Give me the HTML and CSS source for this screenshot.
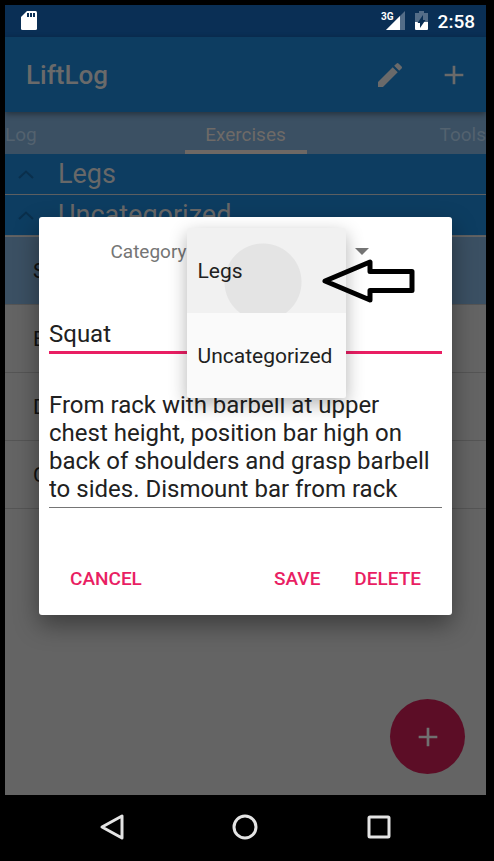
FILE: index.html
```html
<!DOCTYPE html>
<html lang="en">
<head>
<meta charset="utf-8">
<meta name="viewport" content="width=device-width, initial-scale=1">
<title>LiftLog</title>
<link rel="stylesheet" href="styles.css">
</head>
<body>
<div class="phone">
  <div class="screen">
    <div class="status-bar">
      <svg class="sd-icon" width="16" height="20" viewBox="0 0 16 20" aria-hidden="true"><path fill="#fff" d="M6 0h8.500a1.500 1.500 0 0 1 1.500 1.500v16a1.500 1.500 0 0 1-1.500 1.500h-13a1.500 1.500 0 0 1-1.500-1.500V6z"/><path fill="#0a2f55" d="M6 2h2v4H6zM9 2h2v4H9zM12 2h2v4h-2z"/></svg>
      <div class="status-right">
        <div class="signal">
          <span class="network">3G</span>
          <svg width="20" height="20" viewBox="0 0 20 20" aria-hidden="true"><path fill="#546d88" d="M20 0v19H1z"/><path fill="#fff" d="M15 5v14H1z"/></svg>
        </div>
        <svg width="13" height="20" viewBox="0 0 13 20" aria-hidden="true"><path fill="#546d88" d="M4 0h5v2h4v9H0V2h4z"/><path fill="#fff" d="M0 11h13v7a1 1 0 0 1-1 1H1a1 1 0 0 1-1-1z"/><path fill="#0a2f55" d="M8 4v5h2.500L5 17v-5H2.500z"/></svg>
        <time>2:58</time>
      </div>
    </div>
    <header class="app-bar">
      <h1>LiftLog</h1>
      <button class="icon-button" aria-label="Edit"><svg width="32" height="32" viewBox="0 0 24 24"><path fill="currentColor" d="M3 17.250V21h3.750L17.810 9.940l-3.750-3.750L3 17.250zM20.710 7.040a1 1 0 0 0 0-1.410l-2.340-2.340a1 1 0 0 0-1.410 0l-1.830 1.830 3.750 3.750 1.830-1.830z"/></svg></button>
      <button class="icon-button" aria-label="Add"><svg width="32" height="32" viewBox="0 0 24 24"><path fill="currentColor" d="M19 13h-6v6h-2v-6H5v-2h6V5h2v6h6z"/></svg></button>
    </header>
    <nav class="tabs">
      <a href="#log">Log</a>
      <a href="#exercises" class="active" aria-current="page">Exercises</a>
      <a href="#tools">Tools</a>
    </nav>
    <main class="list">
      <h2 class="group"><svg width="16" height="9" viewBox="0 0 16 9" aria-hidden="true"><path d="M1 8l7-6.500L15 8"/></svg>Legs</h2>
      <h2 class="group"><svg width="16" height="9" viewBox="0 0 16 9" aria-hidden="true"><path d="M1 8l7-6.500L15 8"/></svg>Uncategorized</h2>
      <ul class="exercises">
        <li class="selected">Squat</li>
        <li>Bench</li>
        <li>Deadlift</li>
        <li>Curl</li>
      </ul>
    </main>
    <button class="fab" aria-label="Add exercise"><svg width="32" height="32" viewBox="0 0 24 24"><path fill="currentColor" d="M19 13h-6v6h-2v-6H5v-2h6V5h2v6h6z"/></svg></button>
    <div class="overlay">
      <form class="dialog" role="dialog" aria-label="Edit exercise">
        <div class="category">
          <label for="category">Category</label>
          <div class="spinner">
            <select id="category"><option>Legs</option><option>Uncategorized</option></select>
            <svg width="14" height="7" viewBox="0 0 14 7" aria-hidden="true"><path fill="#757575" d="M0 0h14L7 7z"/></svg>
            <div class="menu">
              <button type="button" class="pressed">Legs</button>
              <button type="button">Uncategorized</button>
            </div>
            <svg class="pointer" width="96" height="46" viewBox="0 0 96 46" aria-hidden="true"><path fill="none" stroke="#000" stroke-width="5" stroke-linejoin="round" d="M5 23L50 4v9.500h42v19H50V42z"/></svg>
          </div>
        </div>
        <input class="name" type="text" value="Squat" aria-label="Name">
        <textarea class="description" rows="4" aria-label="Description">From rack with barbell at upper chest height, position bar high on back of shoulders and grasp barbell to sides. Dismount bar from rack</textarea>
        <div class="actions">
          <button type="button" class="cancel">CANCEL</button>
          <button type="button">SAVE</button>
          <button type="button">DELETE</button>
        </div>
      </form>
    </div>
  </div>
  <nav class="system-nav">
    <button aria-label="Back"><svg width="26" height="28" viewBox="0 0 26 28"><path d="M23 3v22L3 14z"/></svg></button>
    <button aria-label="Home"><svg width="26" height="28" viewBox="0 0 26 28"><circle cx="13" cy="14" r="11"/></svg></button>
    <button aria-label="Recent apps"><svg width="26" height="28" viewBox="0 0 26 28"><rect x="3" y="4" width="20" height="20" rx="1"/></svg></button>
  </nav>
</div>
</body>
</html>
```
FILE: styles.css
```css
* {
  box-sizing: border-box;
}

body {
  margin: 0;
  background: #000;
  font-family: Roboto, "Liberation Sans", sans-serif;
}

button {
  padding: 0;
  border: 0;
  background: none;
  font: inherit;
  color: inherit;
}

svg {
  display: block;
}

h1, h2, ul {
  margin: 0;
  padding: 0;
}

.phone {
  display: flex;
  flex-direction: column;
  min-height: 100vh;
  padding: 5px 8px 5px 5px;
}

.screen {
  position: relative;
  flex: 1;
  display: flex;
  flex-direction: column;
  overflow: hidden;
  background: #646464;
}

.status-bar {
  display: flex;
  justify-content: space-between;
  align-items: center;
  height: 32px;
  padding: 0 11px 0 16px;
  background: #0a2f55;
  color: #fff;
}

.status-right {
  display: flex;
  align-items: center;
  gap: 10px;
}

.status-right time {
  font-size: 19px;
  font-weight: 500;
}

.signal {
  position: relative;
}

.network {
  position: absolute;
  top: 1px;
  right: 11px;
  font-size: 10px;
  line-height: 10px;
  font-weight: 700;
}

.app-bar {
  position: relative;
  display: flex;
  align-items: center;
  gap: 32px;
  height: 75px;
  padding: 0 16px 0 21px;
  background: #0d3d61;
  color: #6a6a6a;
  box-shadow: 0 2px 6px rgba(0, 0, 0, 0.4);
}

.app-bar h1 {
  flex: 1;
  font-size: 26px;
  font-weight: 500;
}

.tabs {
  display: flex;
  justify-content: space-between;
  height: 42px;
  background: #3b5063;
  color: #53626f;
  font-size: 19px;
  line-height: 46px;
}

.tabs a {
  flex: 1;
  color: inherit;
  text-decoration: none;
}

.tabs a:last-child {
  text-align: right;
}

.tabs .active {
  flex: 0 0 122px;
  border-bottom: 4px solid #6e6864;
  color: #6e6a67;
  text-align: center;
}

.group {
  display: flex;
  align-items: center;
  gap: 24px;
  height: 41px;
  padding-left: 13px;
  border-bottom: 1px solid #5d5f61;
  background: #0d3d61;
  color: #686868;
  font-size: 27px;
  font-weight: 400;
}

.group svg {
  fill: none;
  stroke: #0a2f4c;
  stroke-width: 2;
}

.exercises {
  padding-top: 1px;
  list-style: none;
  color: #101010;
  font-size: 21px;
}

.exercises li {
  height: 68px;
  padding-left: 28px;
  border-bottom: 1px solid #555;
  line-height: 68px;
}

.exercises .selected {
  background: #3b5063;
}

.fab {
  position: absolute;
  right: 21px;
  bottom: 21px;
  display: grid;
  place-items: center;
  width: 75px;
  height: 75px;
  border-radius: 50%;
  background: #5c0d26;
  color: #707070;
}

.overlay {
  position: absolute;
  inset: 32px 0 0;
  display: flex;
  align-items: center;
  padding: 0 34px;
}

.dialog {
  flex: 1;
  min-width: 0;
  padding: 0 10px;
  border-radius: 3px;
  background: #fff;
  color: #212121;
  box-shadow: 0 10px 24px rgba(0, 0, 0, 0.4);
}

.category {
  display: flex;
  justify-content: center;
  align-items: center;
  height: 68px;
  color: #757575;
  font-size: 19px;
}

.spinner {
  position: relative;
  display: flex;
  align-items: center;
  width: 194px;
  padding-right: 12px;
}

.spinner select {
  flex: 1;
  min-width: 0;
  padding: 0 11px;
  border: 0;
  appearance: none;
  background: none;
  color: #212121;
  font: inherit;
  font-size: 21px;
}

.menu {
  position: absolute;
  top: -11px;
  left: 0;
  width: 159px;
  overflow: hidden;
  border-radius: 2px;
  background: #fafafa;
  box-shadow: 0 6px 18px rgba(0, 0, 0, 0.3);
}

.menu button {
  display: block;
  width: 100%;
  height: 85px;
  padding-left: 11px;
  color: #212121;
  font-size: 21px;
  text-align: left;
}

.menu .pressed {
  background: radial-gradient(circle at 76px 54px, #e4e4e4 38px, #f1f1f1 39px);
}

.pointer {
  position: absolute;
  top: 19px;
  left: 133px;
}

.name,
.description {
  display: block;
  width: 100%;
  padding: 0;
  border: 0;
  border-radius: 0;
  outline: 0;
  background: none;
  color: inherit;
  font: inherit;
  font-size: 24px;
  line-height: 28px;
}

.name {
  height: 37px;
  margin-top: 32px;
  border-bottom: 3px solid #e91e63;
}

.description {
  height: 117px;
  margin-top: 37px;
  border-bottom: 1px solid #757575;
  overflow: hidden;
  resize: none;
}

.actions {
  display: flex;
  align-items: center;
  gap: 34px;
  height: 107px;
  padding: 34px 21px 0;
  color: #e91e63;
  font-size: 19px;
  font-weight: 500;
}

.cancel {
  margin-right: auto;
}

.system-nav {
  display: flex;
  justify-content: space-around;
  align-items: center;
  height: 61px;
  padding: 2px 40px 0;
}

.system-nav svg {
  fill: none;
  stroke: #e4e4e4;
  stroke-width: 3;
  stroke-linejoin: round;
}
```
